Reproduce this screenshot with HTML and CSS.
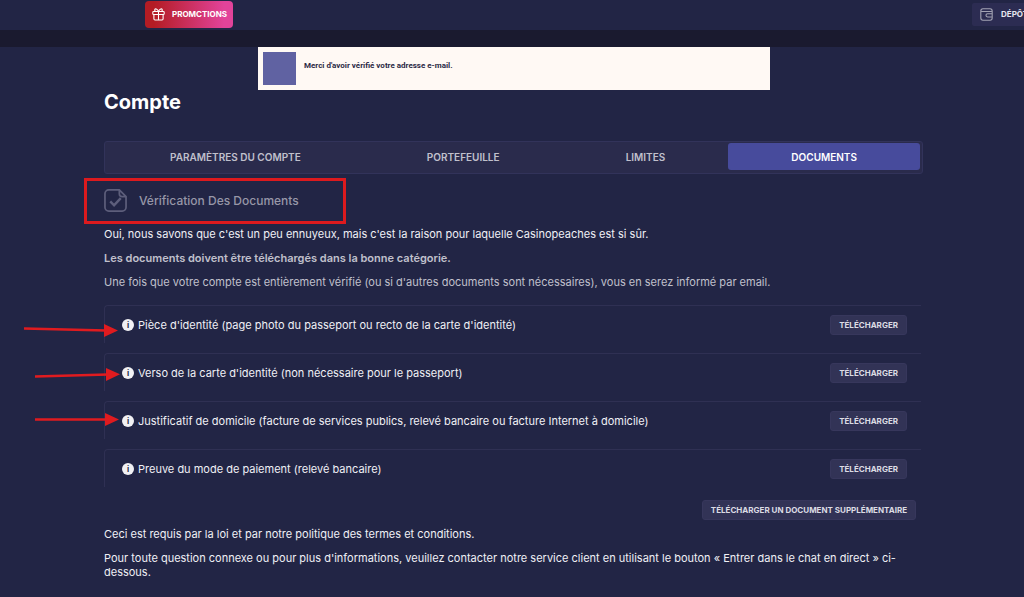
FILE: index.html
```html
<!DOCTYPE html>
<html lang="fr">
<head>
    <meta charset="UTF-8">
    <meta name="viewport" content="width=device-width, initial-scale=1.0">
    <title>Compte</title>
    <link rel="stylesheet" href="styles.css">
</head>
<body>
    <header class="topbar">
        <a class="promo-btn" href="#">
            <svg class="icon" viewBox="0 0 24 24" fill="none" stroke="#fff" stroke-width="2">
                <rect x="1.5" y="6.5" width="21" height="5.5" rx="1.5"/>
                <path d="M3.5 12v8a2 2 0 0 0 2 2h13a2 2 0 0 0 2-2v-8M12 6.5V22M12 6.5C10 1 5 0 5 4c0 1.5 1 2.5 2.5 2.5M12 6.5C14 1 19 0 19 4c0 1.5-1 2.5-2.5 2.5"/>
            </svg>
            PROMCTIONS
        </a>
        <a class="deposit-btn" href="#">
            <svg class="icon" viewBox="0 0 24 24" fill="none" stroke="#a3a3b4" stroke-width="2">
                <rect x="1.5" y="1.5" width="21" height="21" rx="4"/>
                <path d="M2 6.5h20M22 10.5h-8a3 3 0 0 0 0 6h8"/>
            </svg>
            DÉPÔT
        </a>
    </header>
    <div class="strip"></div>

    <div class="toast" role="status">
        <span class="toast-icon"></span>
        <p>Merci d'avoir vérifié votre adresse e-mail.</p>
    </div>

    <main class="account">
        <h1>Compte</h1>

        <nav class="tabs">
            <a href="#">PARAMÈTRES DU COMPTE</a>
            <a href="#">PORTEFEUILLE</a>
            <a href="#">LIMITES</a>
            <a class="active" href="#">DOCUMENTS</a>
        </nav>

        <h2 class="section-title">
            <svg class="doc-icon" viewBox="0 0 24 24" fill="none" stroke="#5d5e7b" stroke-width="1.8">
                <path d="M16 1H5a4 4 0 0 0-4 4v14a4 4 0 0 0 4 4h14a4 4 0 0 0 4-4V8zM16 1v4a3 3 0 0 0 3 3h4"/>
                <path d="M6.5 13l4 4 7-7.5" stroke-width="2.6"/>
            </svg>
            Vérification Des Documents
        </h2>

        <p class="light">Oui, nous savons que c'est un peu ennuyeux, mais c'est la raison pour laquelle Casinopeaches est si sûr.</p>
        <p class="strong">Les documents doivent être téléchargés dans la bonne catégorie.</p>
        <p>Une fois que votre compte est entièrement vérifié (ou si d'autres documents sont nécessaires), vous en serez informé par email.</p>

        <ul class="doc-list">
            <li>
                <span class="info">i</span>
                <span class="doc-name">Pièce d'identité (page photo du passeport ou recto de la carte d'identité)</span>
                <button class="btn" type="button">TÉLÉCHARGER</button>
            </li>
            <li>
                <span class="info">i</span>
                <span class="doc-name">Verso de la carte d'identité (non nécessaire pour le passeport)</span>
                <button class="btn" type="button">TÉLÉCHARGER</button>
            </li>
            <li>
                <span class="info">i</span>
                <span class="doc-name">Justificatif de domicile (facture de services publics, relevé bancaire ou facture Internet à domicile)</span>
                <button class="btn" type="button">TÉLÉCHARGER</button>
            </li>
            <li>
                <span class="info">i</span>
                <span class="doc-name">Preuve du mode de paiement (relevé bancaire)</span>
                <button class="btn" type="button">TÉLÉCHARGER</button>
            </li>
        </ul>

        <div class="extra">
            <button class="btn" type="button">TÉLÉCHARGER UN DOCUMENT SUPPLÉMENTAIRE</button>
        </div>

        <p class="light">Ceci est requis par la loi et par notre politique des termes et conditions.</p>
        <p class="light">Pour toute question connexe ou pour plus d'informations, veuillez contacter notre service client en utilisant le bouton « Entrer dans le chat en direct » ci-dessous.</p>
    </main>

    <!-- arrows over the first three rows -->
    <svg class="arrows" width="110" height="110" viewBox="0 0 110 110" stroke="#e01b1f" stroke-width="2.5" fill="#e01b1f">
        <path d="M4 8.5L86 10.5M15 56.5L88 54.5M15 99.5h72"/>
        <path stroke="none" d="M84 4l14 6.5-14 6.5zM86 48l14 6.3-14 6.7zM85 93l14 6.5-14 6.5z"/>
    </svg>
</body>
</html>
```
FILE: styles.css
```css
* {
    margin: 0;
    padding: 0;
    box-sizing: border-box;
}

body {
    position: relative;
    font-family: Inter, "Open Sans", sans-serif;
    font-size: 11px;
    line-height: 14px;
    background: #222545;
    color: #c0c0cc;
    min-height: 100vh;
    overflow-x: hidden;
}

a {
    color: inherit;
    text-decoration: none;
}

.topbar {
    display: flex;
    justify-content: space-between;
    align-items: center;
    height: 30px;
    padding: 0 0 2px 145px;
    overflow: hidden;
    font-size: 8px;
    font-weight: 700;
}

.icon {
    width: 13px;
    height: 13px;
}

.promo-btn {
    display: flex;
    align-items: center;
    gap: 7px;
    height: 27px;
    padding: 0 6px 0 7px;
    border-radius: 4px;
    background: linear-gradient(90deg, #b41c24 10%, #e2439a 90%);
    color: #fff;
}

.deposit-btn {
    display: flex;
    align-items: center;
    gap: 8px;
    width: 88px;
    height: 23px;
    margin-right: -36px;
    padding: 0 8px;
    border-radius: 2px;
    background: #2c2c52;
    color: #e6e6ee;
}

.strip {
    height: 17px;
    background: #1a1a2f;
}

.toast {
    display: flex;
    gap: 8px;
    width: 50%;
    height: 43px;
    margin-left: calc(25% + 2px);
    padding: 5px;
    background: #fff9f4;
    color: #2b2a45;
    font-family: Roboto, Arial, sans-serif;
    font-size: 8px;
    font-weight: 700;
}

.toast p {
    padding-top: 7px;
}

.toast-icon {
    width: 33px;
    height: 33px;
    background: #6062a2;
}

.account {
    padding: 0 101px 16px 104px;
}

h1 {
    color: #fff;
    font-size: 20px;
    font-weight: 700;
    line-height: 24px;
    margin-bottom: 27px;
}

.tabs {
    display: flex;
    height: 33px;
    margin-bottom: 4px;
    padding: 1px 2px 3px;
    border: 1px solid #32335a;
    border-radius: 3px;
    background: #2a2b4c;
    font-size: 10px;
    font-weight: 600;
}

.tabs a {
    display: flex;
    flex: 1 1 auto;
    align-items: center;
    justify-content: center;
    border-radius: 3px;
}

.tabs .active {
    background: #474b9c;
    color: #fff;
}

.section-title {
    display: flex;
    align-items: center;
    gap: 12px;
    width: 262px;
    height: 46px;
    margin: 0 0 3px -20px;
    padding: 0 0 1px 17px;
    border: 3px solid #dc1a1e;
    color: #9797a8;
    font-size: 12px;
    font-weight: 500;
}

.doc-icon {
    width: 23px;
    height: 23px;
}

.account p {
    margin-bottom: 10px;
}

.account .light {
    color: #f0f0f5;
}

.account .strong {
    font-weight: 600;
}

.doc-list {
    list-style: none;
    margin-right: 2px;
    padding-top: 6px;
}

.doc-list li {
    display: flex;
    align-items: center;
    height: 38px;
    margin-bottom: 10px;
    padding: 0 14px 0 17px;
    border-top: 1px solid #2f3053;
    border-left: 1px solid #2f3053;
    border-top-left-radius: 4px;
    color: #f0f0f5;
}

.info {
    width: 12px;
    height: 12px;
    margin-right: 4px;
    border-radius: 50%;
    background: #f1f1f4;
    color: #222545;
    font-size: 8px;
    font-weight: 700;
    line-height: 12px;
    text-align: center;
}

.doc-name {
    flex: 1;
}

.btn {
    height: 20px;
    padding: 0 8px;
    border: 1px solid #37375c;
    border-radius: 3px;
    background: #323356;
    color: #dcdce4;
    font-family: inherit;
    font-size: 8px;
    font-weight: 700;
    cursor: pointer;
}

.extra {
    display: flex;
    justify-content: flex-end;
    margin-bottom: 7px;
    padding: 3px 7px 0 0;
}

.arrows {
    position: absolute;
    left: 20px;
    top: 320px;
}
```
